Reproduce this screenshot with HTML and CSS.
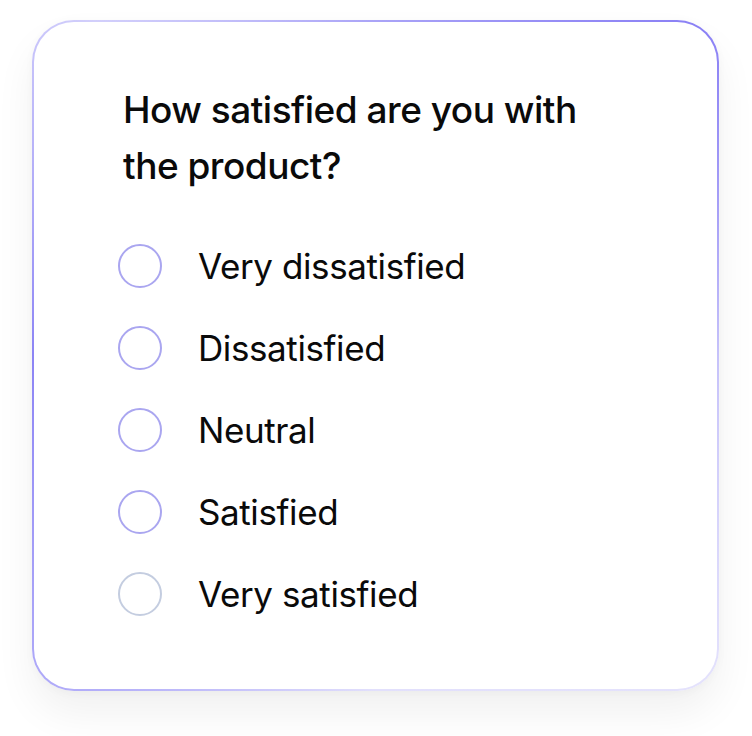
FILE: index.html
```html
<!DOCTYPE html>
<html>
<head>
<meta charset="utf-8">
<link rel="stylesheet" href="styles.css">
</head>
<body>
<div class="card">
  <h1 class="question">How satisfied are you with the product?</h1>
  <ul class="options">
    <li class="option"><span class="radio"></span><span class="label">Very dissatisfied</span></li>
    <li class="option"><span class="radio"></span><span class="label">Dissatisfied</span></li>
    <li class="option"><span class="radio"></span><span class="label">Neutral</span></li>
    <li class="option"><span class="radio"></span><span class="label">Satisfied</span></li>
    <li class="option"><span class="radio radio-muted"></span><span class="label">Very satisfied</span></li>
  </ul>
</div>
</body>
</html>
```
FILE: styles.css
```css
html, body {
  margin: 0;
  padding: 0;
  background: #ffffff;
}
body {
  width: 752px;
  height: 736px;
  padding: 20px 0 0 32px;
  box-sizing: border-box;
  font-family: Inter, "Noto Sans", sans-serif;
  color: #0a0a0a;
}
.card {
  width: 687px;
  height: 671px;
  box-sizing: border-box;
  border: 2px solid transparent;
  border-radius: 42px;
  background:
    linear-gradient(#fff, #fff) padding-box,
    conic-gradient(from 0deg at 50% 50%, #aaa4f7 0deg, #8a80f5 45deg, #c6c2fa 90deg, #e4e2fc 135deg, #e2e0fc 180deg, #b3aef9 220deg, #8c84f5 270deg, #d2cffb 320deg, #aaa4f7 360deg) border-box;
  box-shadow: 0 22px 40px rgba(0, 0, 0, 0.06), 0 2px 10px rgba(0, 0, 0, 0.03);
  padding: 60px 40px 0 84px;
}
.question {
  margin: 0 0 0 5px;
  font-size: 37px;
  font-weight: 500;
  line-height: 56px;
  letter-spacing: -0.5px;
  width: 480px;
}
.options {
  list-style: none;
  margin: 50px 0 0;
  padding: 0;
  display: flex;
  flex-direction: column;
  gap: 38px;
}
.option {
  display: flex;
  align-items: center;
  gap: 36px;
  height: 44px;
}
.radio {
  width: 44px;
  height: 44px;
  box-sizing: border-box;
  border: 2px solid #aaa6f0;
  border-radius: 50%;
  flex: none;
}
.radio-muted {
  border-color: #c4cde0;
}
.label {
  font-size: 35px;
  font-weight: 400;
  letter-spacing: -0.4px;
}
```
